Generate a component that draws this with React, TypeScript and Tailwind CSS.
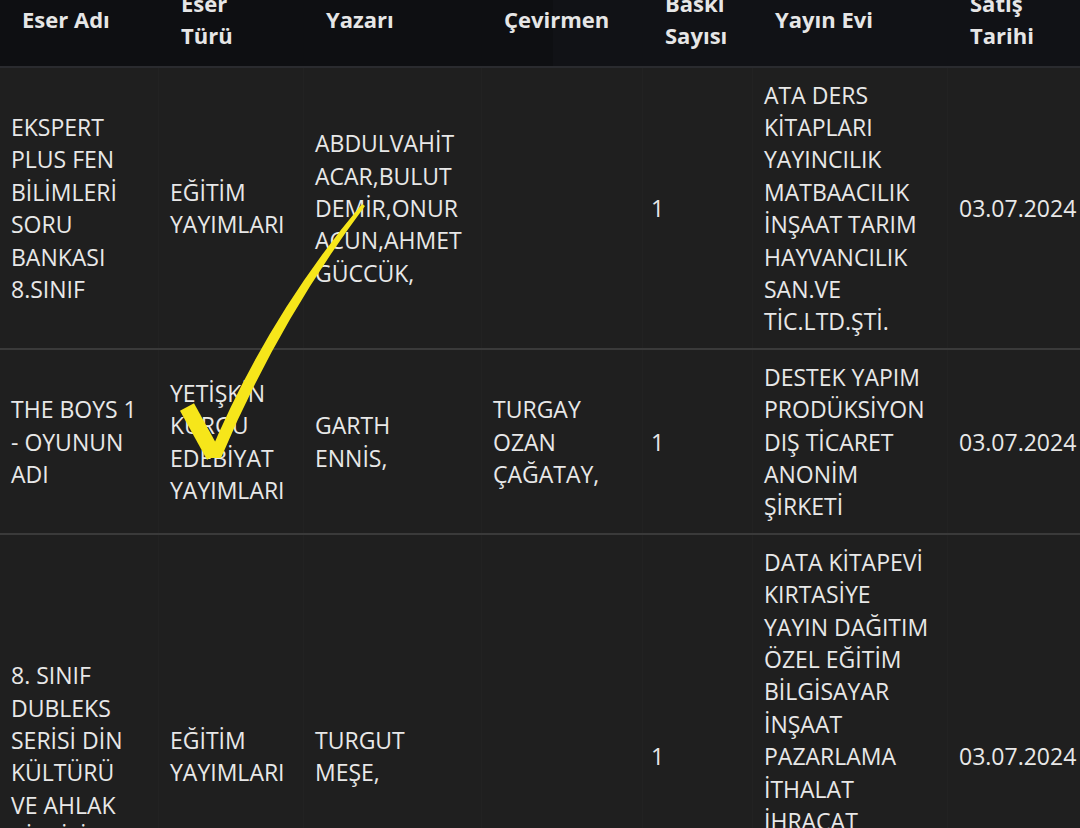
import React from "react";

type Row = { cells: string[][] };

const headers: string[][] = [
  ["Eser Adı"],
  ["Eser", "Türü"],
  ["Yazarı"],
  ["Çevirmen"],
  ["Baskı", "Sayısı"],
  ["Yayın Evi"],
  ["Satış", "Tarihi"],
];

const rows: Row[] = [
  {
    cells: [
      ["EKSPERT", "PLUS FEN", "BİLİMLERİ", "SORU", "BANKASI", "8.SINIF"],
      ["EĞİTİM", "YAYIMLARI"],
      ["ABDULVAHİT", "ACAR,BULUT", "DEMİR,ONUR", "ACUN,AHMET", "GÜCCÜK,"],
      [],
      ["1"],
      [
        "ATA DERS",
        "KİTAPLARI",
        "YAYINCILIK",
        "MATBAACILIK",
        "İNŞAAT TARIM",
        "HAYVANCILIK",
        "SAN.VE",
        "TİC.LTD.ŞTİ.",
      ],
      ["03.07.2024"],
    ],
  },
  {
    cells: [
      ["THE BOYS 1", "- OYUNUN", "ADI"],
      ["YETİŞKİN", "KURGU", "EDEBİYAT", "YAYIMLARI"],
      ["GARTH", "ENNİS,"],
      ["TURGAY", "OZAN", "ÇAĞATAY,"],
      ["1"],
      ["DESTEK YAPIM", "PRODÜKSİYON", "DIŞ TİCARET", "ANONİM", "ŞİRKETİ"],
      ["03.07.2024"],
    ],
  },
  {
    cells: [
      ["8. SINIF", "DUBLEKS", "SERİSİ DİN", "KÜLTÜRÜ", "VE AHLAK", "BİLGİSİ"],
      ["EĞİTİM", "YAYIMLARI"],
      ["TURGUT", "MEŞE,"],
      [],
      ["1"],
      [
        "DATA KİTAPEVİ",
        "KIRTASİYE",
        "YAYIN DAĞITIM",
        "ÖZEL EĞİTİM",
        "BİLGİSAYAR",
        "İNŞAAT",
        "PAZARLAMA",
        "İTHALAT",
        "İHRACAT",
        "SANAYİ VE",
        "TİCARET",
        "LİMİTED",
        "ŞİRKETİ",
      ],
      ["03.07.2024"],
    ],
  },
];

const grid =
  "grid grid-cols-[159px_145px_178px_161px_110px_195px_132px]";

export default function App() {
  return (
    <div className="relative w-[1080px] h-[828px] overflow-hidden bg-[#1f1f1f] font-['Open_Sans',sans-serif]">
      <div className="-mt-[24px]">
        {/* header */}
        <div className={`${grid} h-[92px] bg-[#0e0f12] border-b-2 border-[#2a2b2f]`}>
          {headers.map((h, i) => (
            <div
              key={i}
              className={`flex flex-col justify-center pl-[22px] pb-[4px] text-[22px] font-bold leading-[32px] text-[#e6e6e6] ${
                i >= 4 ? "bg-[#111216]" : i === 3 ? "bg-[linear-gradient(90deg,#0e0f12_44%,#111216_44%)]" : ""
              }`}
            >
              {h.map((l, j) => (
                <span key={j} className="whitespace-nowrap">
                  {l}
                </span>
              ))}
            </div>
          ))}
        </div>
        {/* body */}
        {rows.map((r, ri) => (
          <div
            key={ri}
            className={`${grid} ${ri < rows.length - 1 ? "border-b-2 border-[#3a3a3a]" : ""}`}
          >
            {r.cells.map((c, ci) => (
              <div
                key={ci}
                className={`flex flex-col justify-center py-[10.5px] text-[23px] leading-[32.4px] text-[#e8e8e8] ${
                  ci === 4 ? "pl-[8px] pr-[11px]" : "px-[11px]"
                } ${ci < 6 ? "border-r border-[#222222]" : ""}`}
              >
                {c.map((l, li) => (
                  <span key={li} className="whitespace-nowrap">
                    {l}
                  </span>
                ))}
              </div>
            ))}
          </div>
        ))}
      </div>

      {/* yellow check mark drawn over the table */}
      <svg
        className="absolute left-0 top-0 pointer-events-none"
        width="1080"
        height="828"
        viewBox="0 0 1080 828"
      >
        <path
          d="M362 204 Q266 318 208 458 L221 458 Q277 324 365 206 Z"
          fill="#f6e61a"
        />
        <path
          d="M187 407 L214 456"
          stroke="#f6e61a"
          strokeWidth="16"
          strokeLinecap="butt"
          fill="none"
        />
      </svg>
    </div>
  );
}
